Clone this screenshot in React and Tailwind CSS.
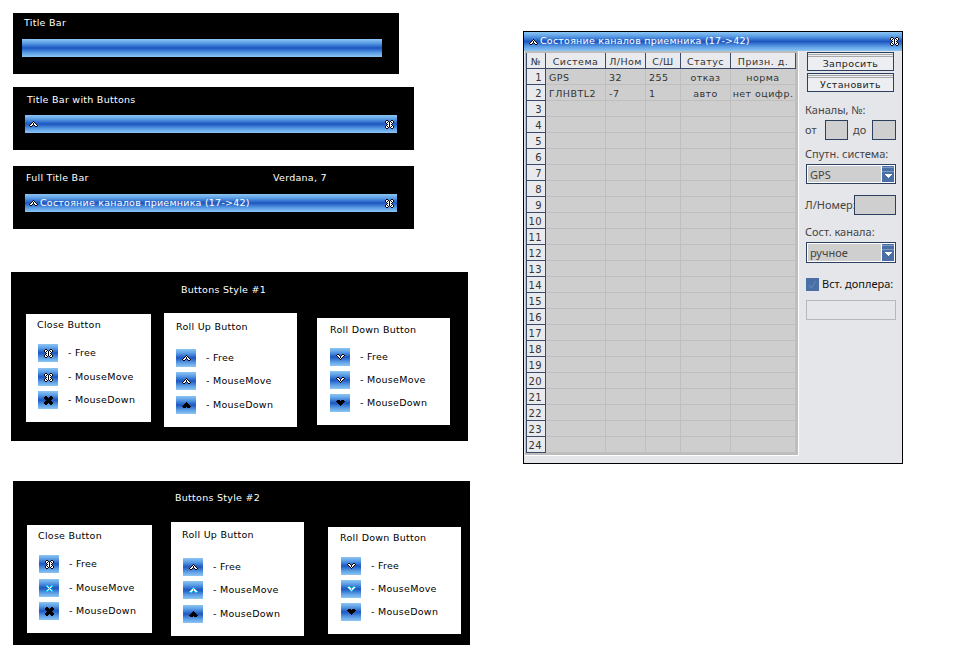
const font = "font-['DejaVu_Sans',Verdana,sans-serif]";
const blue = "bg-[linear-gradient(180deg,#8cc6f2_0%,#5d9fe6_22%,#1b56c0_50%,#5d9fe6_78%,#8cc6f2_100%)]";

const closeFree = [
  ".kk...kk.",
  "kwwk.kwwk",
  "kwkwkwkwk",
  ".kwwkwwk.",
  "..kwkwk..",
  ".kwwkwwk.",
  "kwkwkwkwk",
  "kwwk.kwwk",
  ".kk...kk.",
];
const closeDown = [
  ".kk...kk.",
  "kkkk.kkkk",
  "kkkkkkkkk",
  ".kkkkkkk.",
  "..kkkkk..",
  ".kkkkkkk.",
  "kkkkkkkkk",
  "kkkk.kkkk",
  ".kk...kk.",
];
const closeHot = [
  ".........",
  ".cc...cc.",
  ".cwc.cwc.",
  "..cwcwc..",
  "...cwc...",
  "..cwcwc..",
  ".cwc.cwc.",
  ".cc...cc.",
  ".........",
];
const upFree = [
  "....k....",
  "...kwk...",
  "..kwkwk..",
  ".kwwkwwk.",
  "kwwk.kwwk",
  ".kk...kk.",
];
const upDown = [
  "....k....",
  "...kkk...",
  "..kkkkk..",
  ".kkkkkkk.",
  "kkkkkkkkk",
  ".kkk.kkk.",
];
const upHot = [
  "....c....",
  "...cwc...",
  "..cwcwc..",
  ".cwwcwwc.",
  "cwwc.cwwc",
  ".cc...cc.",
];
const downFree = [...upFree].reverse();
const downDown = [...upDown].reverse();
const downHot = [...upHot].reverse();
const pixelColors = { k: "#000000", w: "#ffffff", c: "#19c4f5" };

function Pixels({ map }) {
  return (
    <svg width={map[0].length} height={map.length} shapeRendering="crispEdges" className="block shrink-0">
      {map.flatMap((row, y) =>
        [...row].map((ch, x) =>
          ch === "." ? null : <rect key={`${x}-${y}`} x={x} y={y} width="1" height="1" fill={pixelColors[ch]} />
        )
      )}
    </svg>
  );
}

function TitleBar({ className = "", title, buttons = true }) {
  return (
    <div className={`flex items-center pr-[3px] ${blue} ${className}`}>
      {buttons && <Pixels map={upFree} />}
      {title && <span className="ml-[2px] whitespace-nowrap text-[9.5px] tracking-[0.23px] text-white">{title}</span>}
      {buttons && <span className="ml-auto"><Pixels map={closeFree} /></span>}
    </div>
  );
}

function ButtonCard({ className, titleClass, title, listClass, gaps, icons }) {
  const labels = ["Free", "MouseMove", "MouseDown"];
  return (
    <div className={`bg-white text-black ${className}`}>
      <div className={`whitespace-nowrap leading-[12px] ${titleClass}`}>{title}</div>
      <div className={listClass}>
        {labels.map((label, i) => (
          <div key={label} className={`flex h-[18px] items-center ${gaps[i]}`}>
            <div className={`flex h-[18px] w-[20px] items-center justify-center ${blue}`}>
              <Pixels map={icons[i]} />
            </div>
            <span className="ml-[10px] whitespace-nowrap">- {label}</span>
          </div>
        ))}
      </div>
    </div>
  );
}

const columns = "grid grid-cols-[20px_60px_40px_35px_50px_65px] grid-rows-[16px]";
const headers = ["№", "Система", "Л/Ном", "С/Ш", "Статус", "Призн. д."];
const dataRows = {
  1: ["GPS", "32", "255", "отказ", "норма"],
  2: ["ГЛНВТL2", "-7", "1", "авто", "нет оцифр."],
};

function ChannelGrid() {
  const rows = Array.from({ length: 24 }, (_, i) => i + 1);
  return (
    <div className="w-[274px] shrink-0 self-start border-r border-b border-white bg-[#bdbdbd] pr-[2px] pb-[2px] pl-[1px] text-[9.5px] leading-[12px] tracking-[0.45px] text-[#333]">
      <div className={`${columns} mt-[2px] bg-[#e8eaee]`}>
        {headers.map((h) => (
          <div key={h} className="flex items-center justify-center whitespace-nowrap border-r border-b border-[#3a4a68] pt-[3px] first:border-l">{h}</div>
        ))}
      </div>
      {rows.map((n) => {
        const row = dataRows[n] || ["", "", "", "", ""];
        return (
          <div key={n} className={columns}>
            <div className="flex items-center justify-end border-x border-b border-[#3a4a68] bg-[#e8eaee] pt-[3px] pr-[3px] text-[10px]">{n}</div>
            {row.map((v, i) => (
              <div
                key={i}
                className={`flex items-center whitespace-nowrap border-r border-b border-[#bfbfbf] bg-[#cecece] pt-[3px] ${i < 3 ? "pl-[3px]" : "justify-center"}`}
              >
                {v}
              </div>
            ))}
          </div>
        );
      })}
    </div>
  );
}

function PanelButton({ children, className = "" }) {
  return (
    <div className={`flex h-[19px] w-[87px] flex-col border border-[#2d3f60] bg-[#eceef2] ${className}`}>
      <div className="mt-px h-[3px] border-y border-[#a8a8a8]" />
      <div className={`flex flex-1 items-center justify-center text-[9.5px] leading-none tracking-[0.35px] text-[#222] ${font}`}>{children}</div>
    </div>
  );
}

function Field({ className }) {
  return <div className={`h-[20px] border border-[#2d3f60] bg-[#cfcfcf] ${className}`} />;
}

function Select({ value, className = "" }) {
  return (
    <div className={`ml-px flex h-[20px] w-[90px] border border-[#2d3f60] bg-white p-px ${className}`}>
      <div className="flex flex-1 items-center bg-[#cfcfcf] pt-px pl-[2px] text-[11px] text-[#444]">{value}</div>
      <div className="ml-px flex w-[12px] flex-col items-center bg-[#4a6ea6]">
        <div className="mt-[1px] h-[5px] w-full border-y border-[#7f9ac2]" />
        <svg width="7" height="4" viewBox="0 0 7 4" className="mt-[2px]" shapeRendering="crispEdges">
          <polygon points="0,0 7,0 3.5,4" fill="#ffffff" />
        </svg>
      </div>
    </div>
  );
}

function SidePanel() {
  return (
    <div className="ml-[6px] flex flex-1 flex-col font-['Noto_Sans',sans-serif] text-[11px] leading-[14px] text-[#444]">
      <PanelButton className="ml-[2px] mt-[1px]">Запросить</PanelButton>
      <PanelButton className="ml-[2px] mt-[2px]">Установить</PanelButton>
      <div className="mt-[11px]">Каналы, №:</div>
      <div className="mt-[3px] flex items-center">
        <span className="w-[20px]">от</span>
        <Field className="w-[23px]" />
        <span className="ml-[5px] w-[19px]">до</span>
        <Field className="w-[24px]" />
      </div>
      <div className="mt-[7px]">Спутн. система:</div>
      <Select value="GPS" className="mt-[3px]" />
      <div className="mt-[11px] flex items-center">
        <span className="w-[49px] whitespace-nowrap">Л/Номер:</span>
        <Field className="w-[42px]" />
      </div>
      <div className="mt-[10px]">Сост. канала:</div>
      <Select value="ручное" className="mt-[3px] h-[21px]" />
      <div className="ml-px mt-[14px] flex items-center text-[#111]">
        <div className="flex h-[13px] w-[13px] items-center justify-center bg-[#4a6ea6]">
          <svg width="9" height="9" viewBox="0 0 9 9" fill="none" stroke="#5f82b8" strokeWidth="1.2">
            <path d="M1 5l2.5 3L8 1" />
          </svg>
        </div>
        <span className="ml-[3px] whitespace-nowrap">Вст. доплера:</span>
      </div>
      <div className="ml-px mt-[9px] h-[20px] w-[90px] border border-[#b8b8b8]" />
    </div>
  );
}

function ChannelWindow() {
  return (
    <div className="ml-[8px] mt-[31px] flex h-[433px] w-[380px] shrink-0 flex-col border border-black bg-[#e4e6ea]">
      <TitleBar className="h-[19px] w-full pl-[5px]" title="Состояние каналов приемника (17->42)" />
      <div className="flex flex-1 pl-px">
        <ChannelGrid />
        <SidePanel />
      </div>
    </div>
  );
}

const style1 = [closeFree, closeFree, closeDown];
const up1 = [upFree, upFree, upDown];
const down1 = [downFree, downFree, downDown];
const close2 = [closeFree, closeHot, closeDown];
const up2 = [upFree, upHot, upDown];
const down2 = [downFree, downHot, downDown];

export default function App() {
  return (
    <div className={`flex h-[659px] w-[962px] overflow-hidden bg-white ${font}`}>
      <div className="w-[515px] shrink-0 text-[9.5px] tracking-[0.27px] text-white">
        <div className="ml-[13px] mt-[13px] h-[61px] w-[386px] bg-black pl-[9px] pt-[3px]">
          <div className="ml-[2px] h-[13px] leading-[13px]">Title Bar</div>
          <TitleBar className="mt-[10px] h-[18px] w-[360px]" buttons={false} />
        </div>
        <div className="ml-[13px] mt-[13px] h-[63px] w-[401px] bg-black pl-[12px] pt-[6px]">
          <div className="ml-[2px] h-[13px] leading-[13px]">Title Bar with Buttons</div>
          <TitleBar className="mt-[9px] h-[18px] w-[372px] pl-[4px]" />
        </div>
        <div className="ml-[13px] mt-[16px] h-[63px] w-[401px] bg-black pl-[12px] pt-[5px]">
          <div className="ml-[1px] flex h-[13px] leading-[13px]">
            <span className="w-[247px]">Full Title Bar</span>
            <span>Verdana, 7</span>
          </div>
          <TitleBar className="mt-[10px] h-[18px] w-[372px] pl-[4px]" title="Состояние каналов приемника (17->42)" />
        </div>

        <div className="ml-[11px] mt-[43px] h-[169px] w-[457px] bg-black">
          <div className="h-[12px] pt-[12px] pl-[170px] leading-[12px]">Buttons Style #1</div>
          <div className="mt-[18px] flex items-start pl-[15px]">
            <ButtonCard className="mt-[12px] h-[108px] w-[125px] pt-[5px]" titleClass="ml-[11px]" title="Close Button" listClass="ml-[12px] mt-[13px]" gaps={["", "mt-[6px]", "mt-[5px]"]} icons={style1} />
            <ButtonCard className="ml-[13px] mt-[11px] h-[114px] w-[133px] pt-[8px]" titleClass="ml-[12px]" title="Roll Up Button" listClass="ml-[12px] mt-[16px]" gaps={["", "mt-[5px]", "mt-[6px]"]} icons={up1} />
            <ButtonCard className="ml-[20px] mt-[16px] h-[107px] w-[133px] pt-[6px]" titleClass="ml-[13px]" title="Roll Down Button" listClass="ml-[13px] mt-[12px]" gaps={["", "mt-[5px]", "mt-[5px]"]} icons={down1} />
          </div>
        </div>

        <div className="ml-[13px] mt-[40px] h-[164px] w-[457px] bg-black">
          <div className="h-[12px] pt-[11px] pl-[162px] leading-[12px]">Buttons Style #2</div>
          <div className="mt-[29px] flex items-start pl-[14px]">
            <ButtonCard className="mt-[3px] h-[108px] w-[125px] pt-[5px]" titleClass="ml-[11px]" title="Close Button" listClass="ml-[12px] mt-[13px]" gaps={["", "mt-[6px]", "mt-[5px]"]} icons={close2} />
            <ButtonCard className="ml-[19px] h-[114px] w-[133px] pt-[7px]" titleClass="ml-[11px]" title="Roll Up Button" listClass="ml-[12px] mt-[17px]" gaps={["", "mt-[5px]", "mt-[6px]"]} icons={up2} />
            <ButtonCard className="ml-[24px] mt-[5px] h-[107px] w-[133px] pt-[5px]" titleClass="ml-[12px]" title="Roll Down Button" listClass="ml-[13px] mt-[13px]" gaps={["", "mt-[5px]", "mt-[5px]"]} icons={down2} />
          </div>
        </div>
      </div>
      <ChannelWindow />
    </div>
  );
}
